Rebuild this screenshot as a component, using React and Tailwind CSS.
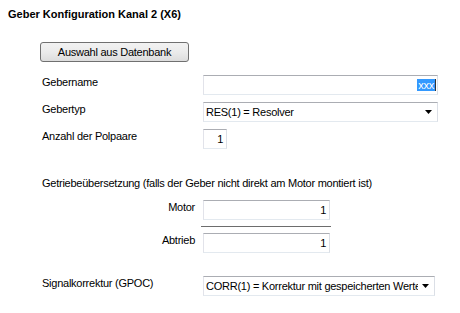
import React from "react";

const boxCls =
  "h-[20px] bg-white border border-[#e3e9ef] border-t-[#abadb3] border-l-[#e2e3ea] border-r-[#dbdfe6] flex items-center";

const Arrow = () => (
  <svg width="7" height="4" viewBox="0 0 7 4" className="shrink-0">
    <path d="M0 0 H7 L3.5 4 Z" fill="#000" />
  </svg>
);

const Row = ({ label, children, top }) => (
  <div className={`flex items-start ${top}`}>
    <div className="w-[203px] shrink-0 pl-[42px] pt-[1px] whitespace-nowrap">{label}</div>
    {children}
  </div>
);

export default function App() {
  return (
    <div className="w-[460px] h-[313px] bg-white text-black text-[11px] leading-[13px] tracking-[-0.25px] font-['Liberation_Sans',Arial,sans-serif] overflow-hidden">
      {/* Titel */}
      <div className="pl-[8px] pt-[8px] font-bold tracking-normal">Geber Konfiguration Kanal 2 (X6)</div>

      <div className="pl-[40px] mt-[21px]">
        <button className="w-[149px] h-[20px] rounded-[3px] border border-[#707070] bg-gradient-to-b from-[#f2f2f2] via-[#ebebeb] to-[#dddddd] text-[11px] leading-[13px]">
          Auswahl aus Datenbank
        </button>
      </div>

      <Row label="Gebername" top="mt-[13px]">
        <div className={`${boxCls} w-[235px] justify-end pr-[1px]`}>
          <span className="bg-[#3399ff] text-white leading-[12px] px-[1px] border-r border-[#333]">xxx</span>
        </div>
      </Row>

      <Row label="Gebertyp" top="mt-[7px]">
        <div className={`${boxCls} w-[235px] pl-[2px] pr-[5px] justify-between`}>
          <span>RES(1) = Resolver</span>
          <Arrow />
        </div>
      </Row>

      <Row label="Anzahl der Polpaare" top="mt-[7px]">
        <div className={`${boxCls} w-[24px] justify-end pr-[3px]`}>1</div>
      </Row>

      {/* Getriebe */}
      <div className="pl-[42px] mt-[28px]">
        Getriebeübersetzung (falls der Geber nicht direkt am Motor montiert ist)
      </div>

      <div className="flex items-start mt-[10px]">
        <div className="w-[195px] text-right pt-[1px]">Motor</div>
        <div className={`${boxCls} ml-[8px] w-[127px] justify-end pr-[3px]`}>1</div>
      </div>
      <div className="ml-[201px] mt-[6px] w-[130px] h-[1px] bg-[#6d6d6d]" />
      <div className="flex items-start mt-[6px]">
        <div className="w-[195px] text-right pt-[1px]">Abtrieb</div>
        <div className={`${boxCls} ml-[8px] w-[127px] justify-end pr-[3px]`}>1</div>
      </div>

      <Row label="Signalkorrektur (GPOC)" top="mt-[23px]">
        <div className={`${boxCls} w-[232px] pl-[2px] pr-[5px] gap-[4px] overflow-hidden`}>
          <span className="whitespace-nowrap overflow-hidden flex-1">
            CORR(1) = Korrektur mit gespeicherten Werten
          </span>
          <Arrow />
        </div>
      </Row>
    </div>
  );
}
